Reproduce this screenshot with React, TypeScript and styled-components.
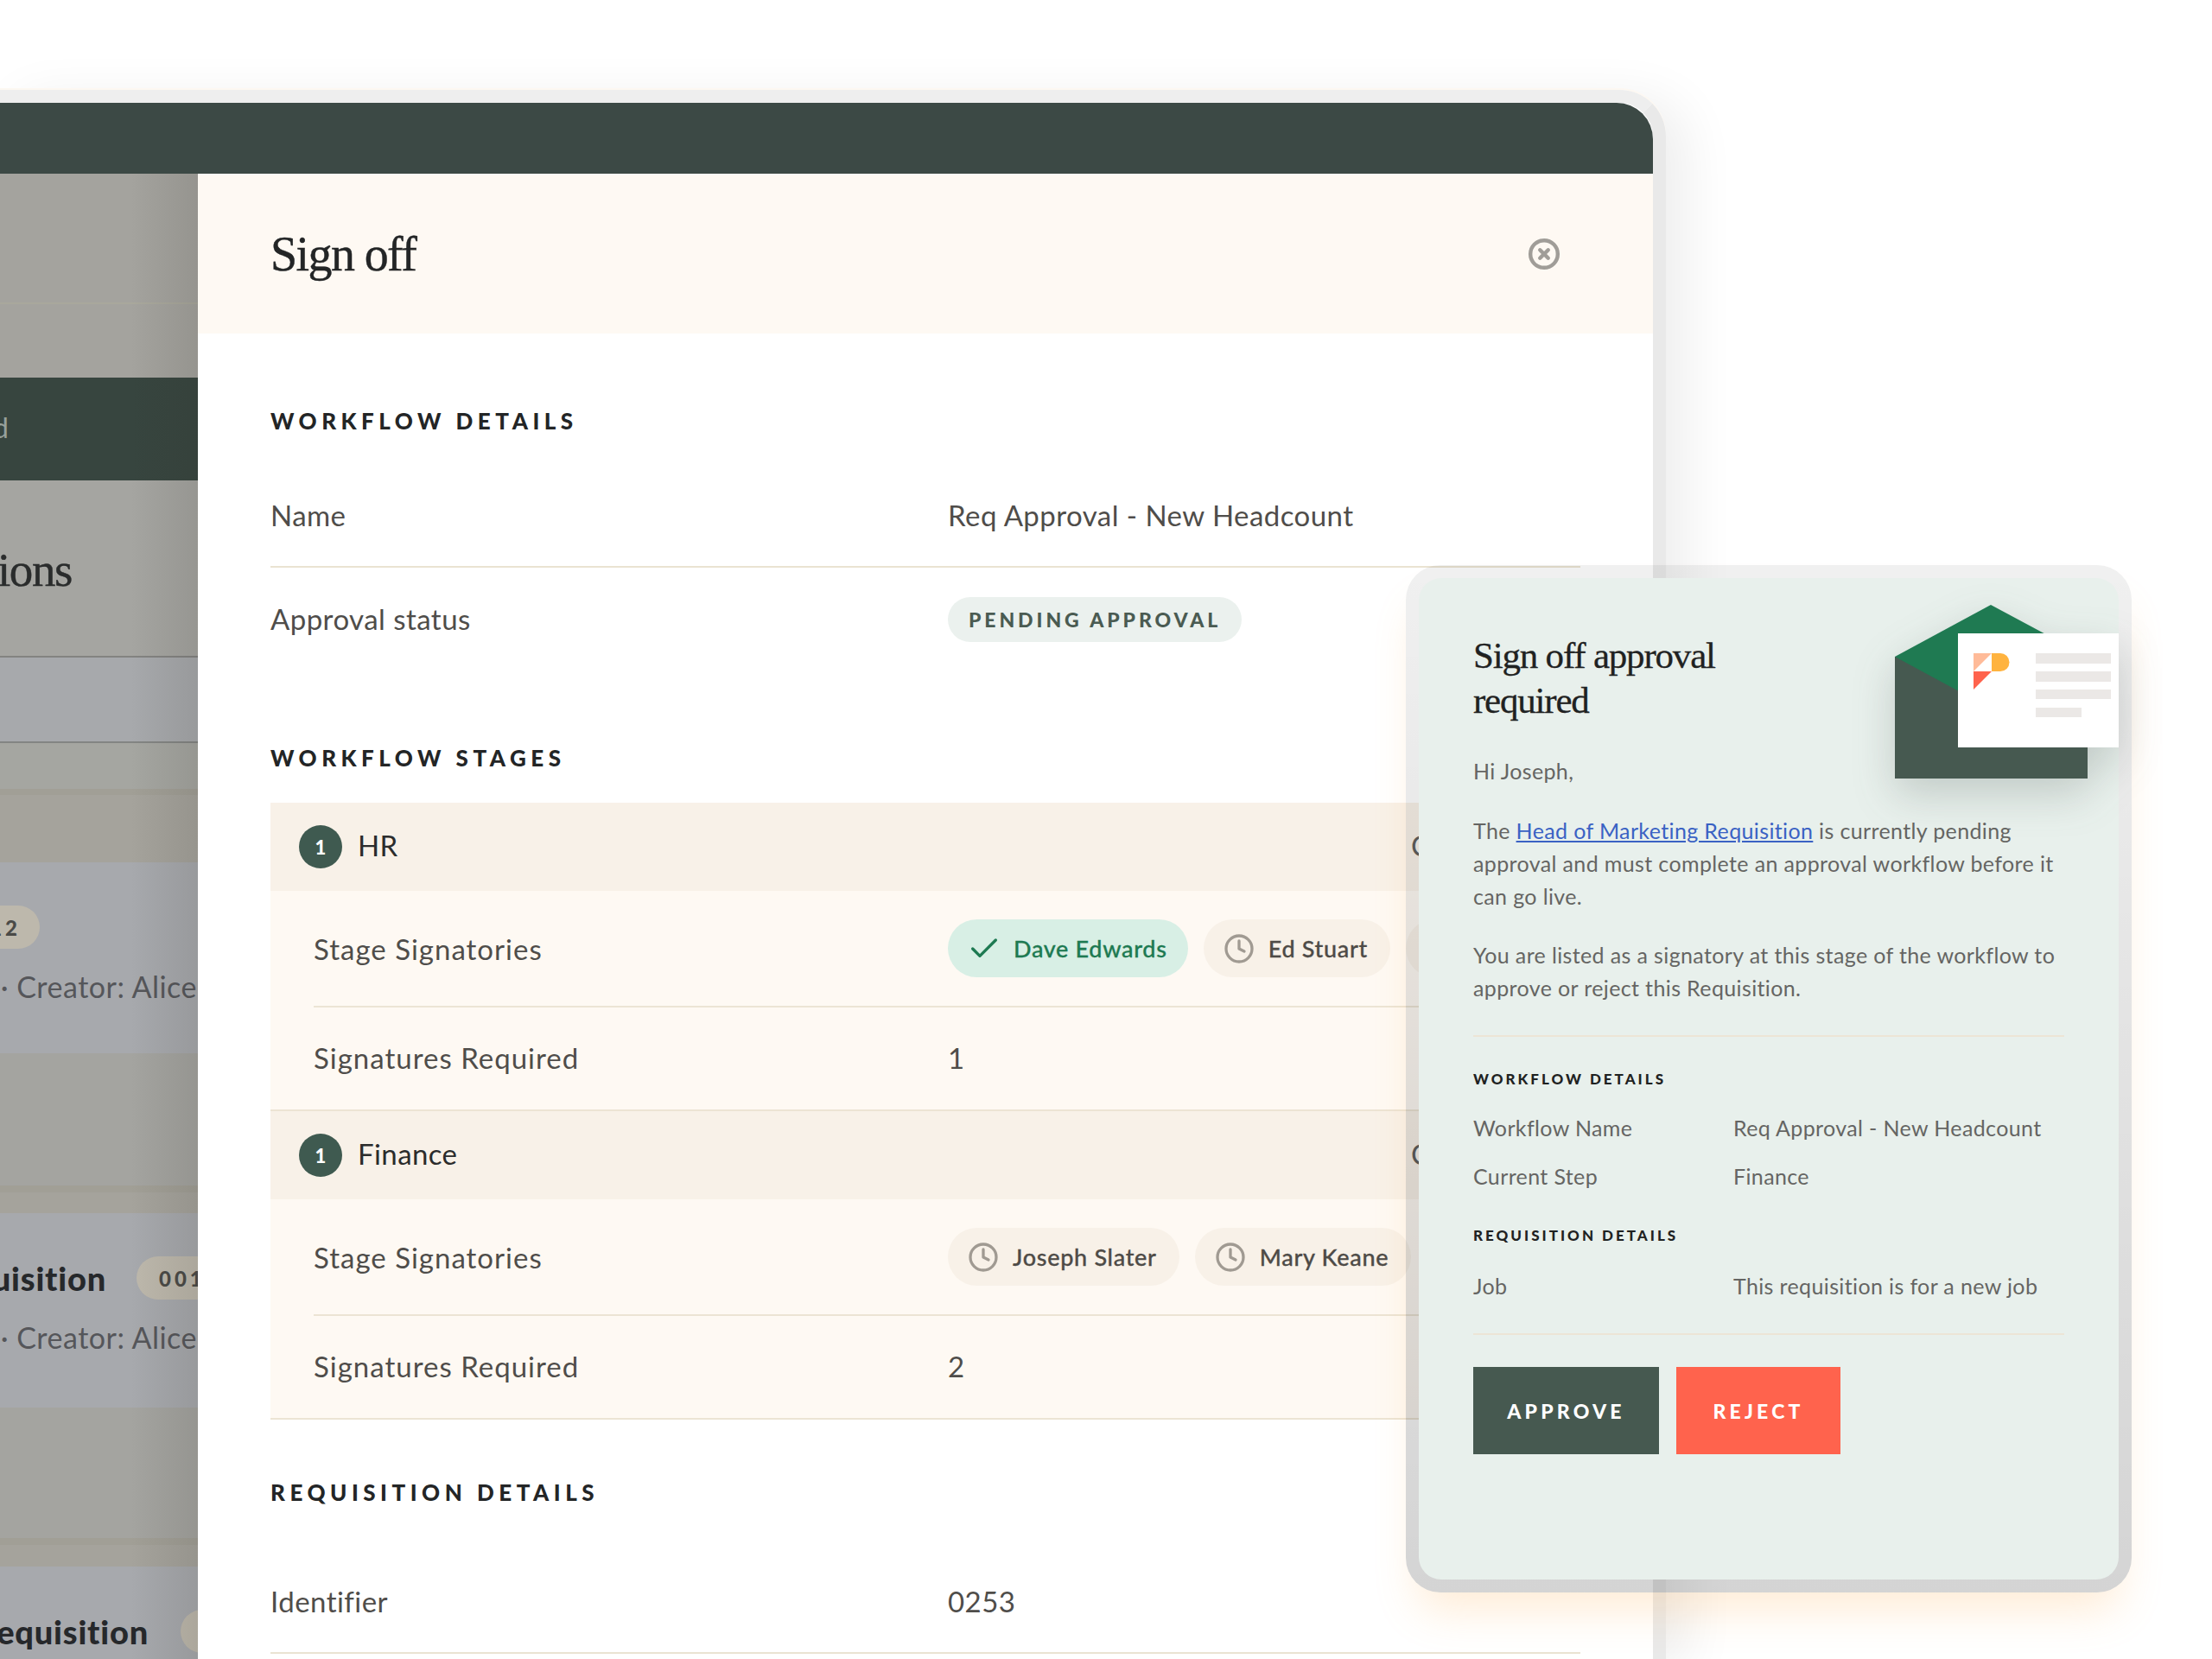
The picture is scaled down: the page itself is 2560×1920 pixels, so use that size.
import React from "react";
import styled, { createGlobalStyle } from "styled-components";
import { Check, CircleX, Clock } from "lucide-react";

const sans = `"Lato", "Open Sans", sans-serif`;
const serif = `"Liberation Serif", serif`;

const GlobalStyle = createGlobalStyle`
  html, body {
    margin: 0;
    background: #ffffff;
  }
  * {
    box-sizing: border-box;
  }
`;

const Page = styled.div`
  position: relative;
  width: 2560px;
  height: 1920px;
  padding-top: 104px;
  overflow: hidden;
  background: #ffffff;
  font-family: ${sans};
`;

const Shell = styled.div`
  width: 1928px;
  height: 1816px;
  border-top: 15px solid #eeeeee;
  border-right: 15px solid #e9e9e9;
  border-top-right-radius: 54px;
  box-shadow: 0 -2px 0 #fdf8f2, 24px 10px 60px rgba(0, 0, 0, 0.07);
`;

const ShellInner = styled.div`
  display: flex;
  flex-direction: column;
  height: 100%;
  border-top-right-radius: 42px;
  overflow: hidden;
`;

const TopBar = styled.div`
  flex: 0 0 82px;
  background: #3c4945;
`;

const Content = styled.div`
  flex: 1;
  display: flex;
  min-height: 0;
`;

/* dimmed page behind the drawer */
const Sidebar = styled.div`
  position: relative;
  flex: 0 0 229px;
  display: flex;
  flex-direction: column;
  overflow: hidden;

  &::after {
    content: "";
    position: absolute;
    inset: 0;
    background: linear-gradient(to right, transparent 66%, rgba(45, 42, 35, 0.12));
  }
`;

const Band = styled.div<{ $h: number; $bg: string; $line?: string }>`
  flex: 0 0 ${(p) => p.$h}px;
  background: ${(p) => p.$bg};
  border-bottom: ${(p) => (p.$line ? `2px solid ${p.$line}` : "none")};
`;

const DarkBand = styled(Band)`
  display: flex;
  align-items: center;
  padding-bottom: 5px;
  font-size: 32px;
  color: #97a19c;
`;

const HeadingBand = styled(Band)`
  display: flex;
  align-items: flex-start;
  padding-top: 74px;
  font-family: ${serif};
  font-size: 55px;
  line-height: 60px;
  letter-spacing: -1.4px;
  -webkit-text-stroke: 0.4px #2a2c2c;
  color: #2a2c2c;
`;

const ItemBand = styled(Band)`
  display: flex;
  flex-direction: column;
  gap: 24px;
  padding-top: 50px;
`;

const Clipped = styled.div<{ $right: number }>`
  display: flex;
  justify-content: flex-end;
  flex: 0 0 ${(p) => p.$right}px;
  width: ${(p) => p.$right}px;
  white-space: nowrap;
`;

const ItemHead = styled.div`
  display: flex;
  align-items: center;
  height: 50px;
  font-size: 38px;
  font-weight: 900;
  letter-spacing: 0.8px;
  color: #26282b;
  white-space: nowrap;
`;

const ItemCount = styled.span<{ $gap: number }>`
  display: inline-flex;
  align-items: center;
  flex: 0 0 auto;
  height: 50px;
  margin-left: ${(p) => p.$gap}px;
  padding: 0 22px 0 26px;
  border-radius: 25px;
  background: #bdb8ac;
  color: #4a4a47;
  font-size: 24px;
  font-weight: 900;
  letter-spacing: 4px;
`;

const ItemMeta = styled.div`
  font-size: 34px;
  line-height: 40px;
  letter-spacing: 0.5px;
  color: #55565a;
  white-space: nowrap;
`;

const Drawer = styled.div`
  flex: 1;
  display: flex;
  flex-direction: column;
  background: #ffffff;
  min-width: 0;
`;

const DrawerHeader = styled.div`
  flex: 0 0 185px;
  display: flex;
  align-items: center;
  justify-content: space-between;
  padding: 0 107px 0 84px;
  background: #fef9f3;
  color: #a09d98;
`;

const DrawerTitle = styled.h1`
  margin: 0;
  font-family: ${serif};
  font-size: 56px;
  font-weight: 400;
  line-height: 60px;
  letter-spacing: -1.6px;
  -webkit-text-stroke: 0.4px #232526;
  color: #232526;
`;

const DrawerBody = styled.div`
  flex: 1;
  padding: 0 84px;
`;

const SectionTitle = styled.h2<{ $top: number; $bottom: number }>`
  margin: ${(p) => p.$top}px 0 ${(p) => p.$bottom}px;
  font-size: 26px;
  font-weight: 900;
  line-height: 30px;
  letter-spacing: 5.5px;
  color: #232526;
`;

const InfoRow = styled.div<{ $line?: boolean }>`
  display: grid;
  grid-template-columns: 784px 1fr;
  align-items: center;
  height: 120px;
  border-bottom: 2px solid ${(p) => (p.$line ? "#eae3d2" : "transparent")};
  font-size: 33px;
  letter-spacing: 0.45px;
  color: #4f4d4a;
`;

const StatusPill = styled.span`
  display: inline-flex;
  align-items: center;
  justify-self: start;
  height: 52px;
  margin-top: 2px;
  padding: 0 24px;
  border-radius: 26px;
  background: #ebf1ee;
  color: #4a5b52;
  font-size: 23px;
  font-weight: 900;
  letter-spacing: 3.9px;
`;

const StageBlock = styled.div`
  background: #fef9f3;
  border-bottom: 2px solid #ece4d4;
`;

const StageHeader = styled.div`
  display: flex;
  align-items: center;
  gap: 18px;
  height: 102px;
  padding-left: 33px;
  background: #f8f1e8;
  font-size: 33px;
  letter-spacing: 0.4px;
  color: #2b2c2c;
`;

const StageNumber = styled.span`
  display: flex;
  align-items: center;
  justify-content: center;
  width: 50px;
  height: 50px;
  border-radius: 50%;
  background: #3f5a50;
  color: #ffffff;
  font-size: 22px;
  font-weight: 900;
`;

const StageName = styled.span`
  margin-bottom: 4px;
`;

const StageStatus = styled.span`
  width: 196px;
  margin-left: auto;
  margin-bottom: 4px;
  color: #5f5f5d;
`;

const StageRow = styled.div<{ $h: number; $line?: boolean }>`
  display: grid;
  grid-template-columns: 734px 1fr;
  align-items: center;
  height: ${(p) => p.$h}px;
  margin-left: 50px;
  border-bottom: 2px solid ${(p) => (p.$line ? "#ece4d4" : "transparent")};
  font-size: 33px;
  letter-spacing: 1px;
  color: #4f4d4a;
`;

const Signatories = styled.div`
  display: flex;
  gap: 18px;
  white-space: nowrap;
`;

const Signatory = styled.span<{ $signed?: boolean }>`
  display: inline-flex;
  align-items: center;
  flex: 0 0 auto;
  gap: ${(p) => (p.$signed ? "14px" : "16px")};
  height: 67px;
  padding: 0 ${(p) => (p.$signed ? "24px" : "26px")} 0 ${(p) => (p.$signed ? "22px" : "23px")};
  border-radius: 34px;
  background: ${(p) => (p.$signed ? "#d8efe5" : "#f8f1e8")};
  color: ${(p) => (p.$signed ? "#1e7a52" : "#4e4b47")};
  font-size: 27px;
  font-weight: 500;
  letter-spacing: 0.7px;
  -webkit-text-stroke: 0.3px currentColor;
  svg {
    color: ${(p) => (p.$signed ? "#1e7a52" : "#a09a92")};
  }
`;

/* floating email preview */
const MailFrame = styled.div`
  position: absolute;
  left: 1627px;
  top: 654px;
  width: 840px;
  height: 1189px;
  padding: 15px;
  border-radius: 40px;
  background: linear-gradient(rgba(0, 0, 0, 0.06), rgba(0, 0, 0, 0.17));
  box-shadow: 0 34px 50px -14px rgba(255, 176, 84, 0.24);
`;

const MailCard = styled.div`
  position: relative;
  height: 100%;
  padding: 64px 63px 0;
  border-radius: 26px;
  background: #e8f0ec;
  font-size: 25px;
  line-height: 38px;
  letter-spacing: 0.37px;
  color: #656563;
`;

const MailArt = styled.svg`
  position: absolute;
  left: 551px;
  top: 31px;
  overflow: visible;
  filter: drop-shadow(0 18px 24px rgba(60, 75, 70, 0.22));
`;

const MailTitle = styled.h3`
  margin: 0 0 36px;
  width: 320px;
  font-family: ${serif};
  font-size: 43px;
  font-weight: 400;
  line-height: 52px;
  letter-spacing: -1.2px;
  -webkit-text-stroke: 0.3px #1f2222;
  color: #1f2222;
`;

const MailText = styled.p<{ $bottom: number }>`
  margin: 0 0 ${(p) => p.$bottom}px;
  width: 684px;
`;

const MailLink = styled.a`
  color: #3a62c4;
  text-decoration: underline;
`;

const Divider = styled.div<{ $top: number; $bottom: number }>`
  width: 684px;
  height: 2px;
  margin: ${(p) => p.$top}px 0 ${(p) => p.$bottom}px;
  background: #ece5d6;
`;

const MailHeading = styled.h4<{ $bottom: number }>`
  margin: 0 0 ${(p) => p.$bottom}px;
  font-size: 17px;
  font-weight: 900;
  line-height: 20px;
  letter-spacing: 3px;
  color: #1f2222;
`;

const MailRows = styled.div<{ $bottom: number }>`
  margin-bottom: ${(p) => p.$bottom}px;
`;

const MailRow = styled.div`
  display: grid;
  grid-template-columns: 301px 1fr;
  align-items: center;
  height: 56px;
`;

const Actions = styled.div`
  display: flex;
  gap: 20px;
`;

const ActionButton = styled.button<{ $width: number; $bg: string }>`
  width: ${(p) => p.$width}px;
  height: 101px;
  border: none;
  background: ${(p) => p.$bg};
  color: #ffffff;
  font-family: ${sans};
  font-size: 23px;
  font-weight: 900;
  letter-spacing: 4.2px;
`;

const PendingIcon = () => <Clock size={36} strokeWidth={2.2} />;

const Envelope = () => (
  <MailArt width="259" height="201" viewBox="0 0 259 201">
    <rect x="0" y="60" width="223" height="141" fill="#465950" />
    <polygon points="0,60 111,0 223,60 111,120" fill="#1f7a52" />
    <rect x="73" y="33" width="186" height="132" fill="#ffffff" />
    <polygon points="91,56 112,56 91,77" fill="#ffbb99" />
    <path d="M112 56h10a10.5 10.5 0 0 1 10.5 10.5a10.5 10.5 0 0 1-10.5 10.5h-10z" fill="#ffb33f" />
    <polygon points="91,77 112,77 91,98" fill="#ff634d" />
    <rect x="163" y="56" width="87" height="12" fill="#ebe8e6" />
    <rect x="163" y="77" width="87" height="12" fill="#ebe8e6" />
    <rect x="163" y="98" width="87" height="11" fill="#ebe8e6" />
    <rect x="163" y="119" width="53" height="11" fill="#ebe8e6" />
  </MailArt>
);

export default function App() {
  return (
    <>
      <GlobalStyle />
      <Page>
        <Shell>
          <ShellInner>
            <TopBar />
            <Content>
              <Sidebar>
                <Band $h={151} $bg="#a4a39e" $line="#a9a89c" />
                <Band $h={85} $bg="#a4a39e" />
                <DarkBand $h={119} $bg="#37453f">
                  <Clipped $right={10}>Dashboard</Clipped>
                </DarkBand>
                <HeadingBand $h={205} $bg="#a5a5a1" $line="#838381">
                  <Clipped $right={83}>Requisitions</Clipped>
                </HeadingBand>
                <Band $h={99} $bg="#a7a9ac" $line="#838583" />
                <Band $h={53} $bg="#a5a6a1" />
                <Band $h={7} $bg="#a19f96" />
                <Band $h={78} $bg="#a5a39c" />
                <ItemBand $h={221} $bg="#a7a9ad">
                  <ItemHead>
                    <Clipped $right={46}>
                      <ItemCount $gap={0}>0012</ItemCount>
                    </Clipped>
                  </ItemHead>
                  <ItemMeta>
                    <Clipped $right={228}>Status: Open · Creator: Alice</Clipped>
                  </ItemMeta>
                </ItemBand>
                <Band $h={153} $bg="#a4a4a0" />
                <Band $h={8} $bg="#a19f96" />
                <Band $h={24} $bg="#a5a39c" />
                <ItemBand $h={225} $bg="#a7a9ad">
                  <ItemHead>
                    <Clipped $right={123}>Requisition</Clipped>
                    <ItemCount $gap={35}>0012</ItemCount>
                  </ItemHead>
                  <ItemMeta>
                    <Clipped $right={228}>Status: Open · Creator: Alice</Clipped>
                  </ItemMeta>
                </ItemBand>
                <Band $h={151} $bg="#a4a4a0" />
                <Band $h={8} $bg="#a19f96" />
                <Band $h={25} $bg="#a5a39c" />
                <ItemBand $h={107} $bg="#a7a9ad">
                  <ItemHead>
                    <Clipped $right={172}>Requisition</Clipped>
                    <ItemCount $gap={37}>0012</ItemCount>
                  </ItemHead>
                </ItemBand>
              </Sidebar>

              <Drawer>
                <DrawerHeader>
                  <DrawerTitle>Sign off</DrawerTitle>
                  <CircleX size={38} strokeWidth={2.8} />
                </DrawerHeader>
                <DrawerBody>
                  <SectionTitle $top={86} $bottom={35}>WORKFLOW DETAILS</SectionTitle>
                  <InfoRow $line>
                    <span>Name</span>
                    <span>Req Approval - New Headcount</span>
                  </InfoRow>
                  <InfoRow>
                    <span>Approval status</span>
                    <StatusPill>PENDING APPROVAL</StatusPill>
                  </InfoRow>

                  <SectionTitle $top={85} $bottom={37}>WORKFLOW STAGES</SectionTitle>
                  <StageBlock>
                    <StageHeader>
                      <StageNumber>1</StageNumber>
                      <StageName>HR</StageName>
                      <StageStatus>Completed</StageStatus>
                    </StageHeader>
                    <StageRow $h={135} $line>
                      <span>Stage Signatories</span>
                      <Signatories>
                        <Signatory $signed>
                          <Check size={40} strokeWidth={2} />
                          Dave Edwards
                        </Signatory>
                        <Signatory>
                          <PendingIcon />
                          Ed Stuart
                        </Signatory>
                        <Signatory>
                          <PendingIcon />
                          Amy Ross
                        </Signatory>
                      </Signatories>
                    </StageRow>
                    <StageRow $h={118}>
                      <span>Signatures Required</span>
                      <span>1</span>
                    </StageRow>
                  </StageBlock>
                  <StageBlock>
                    <StageHeader>
                      <StageNumber>1</StageNumber>
                      <StageName>Finance</StageName>
                      <StageStatus>Current</StageStatus>
                    </StageHeader>
                    <StageRow $h={135} $line>
                      <span>Stage Signatories</span>
                      <Signatories>
                        <Signatory>
                          <PendingIcon />
                          Joseph Slater
                        </Signatory>
                        <Signatory>
                          <PendingIcon />
                          Mary Keane
                        </Signatory>
                      </Signatories>
                    </StageRow>
                    <StageRow $h={118}>
                      <span>Signatures Required</span>
                      <span>2</span>
                    </StageRow>
                  </StageBlock>

                  <SectionTitle $top={69} $bottom={52}>REQUISITION DETAILS</SectionTitle>
                  <InfoRow $line>
                    <span>Identifier</span>
                    <span>0253</span>
                  </InfoRow>
                </DrawerBody>
              </Drawer>
            </Content>
          </ShellInner>
        </Shell>

        <MailFrame>
          <MailCard>
            <Envelope />
            <MailTitle>Sign off approval required</MailTitle>
            <MailText $bottom={31}>Hi Joseph,</MailText>
            <MailText $bottom={30}>
              The <MailLink>Head of Marketing Requisition</MailLink> is currently pending
              approval and must complete an approval workflow before it can go live.
            </MailText>
            <MailText $bottom={0}>
              You are listed as a signatory at this stage of the workflow to approve or reject
              this Requisition.
            </MailText>
            <Divider $top={36} $bottom={39} />
            <MailHeading $bottom={18}>WORKFLOW DETAILS</MailHeading>
            <MailRows $bottom={31}>
              <MailRow>
                <span>Workflow Name</span>
                <span>Req Approval - New Headcount</span>
              </MailRow>
              <MailRow>
                <span>Current Step</span>
                <span>Finance</span>
              </MailRow>
            </MailRows>
            <MailHeading $bottom={20}>REQUISITION DETAILS</MailHeading>
            <MailRow>
              <span>Job</span>
              <span>This requisition is for a new job</span>
            </MailRow>
            <Divider $top={27} $bottom={37} />
            <Actions>
              <ActionButton $width={215} $bg="#465950">APPROVE</ActionButton>
              <ActionButton $width={190} $bg="#ff634d">REJECT</ActionButton>
            </Actions>
          </MailCard>
        </MailFrame>
      </Page>
    </>
  );
}
